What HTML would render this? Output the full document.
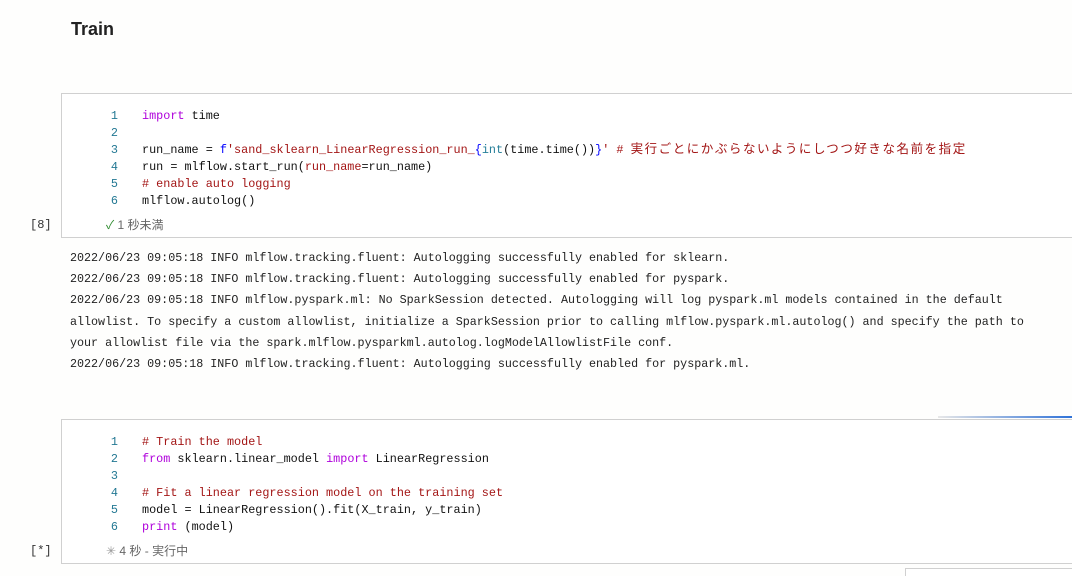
<!DOCTYPE html>
<html style="overflow:hidden"><head><meta charset="utf-8"><style>
html,body{margin:0;width:1072px;height:576px;overflow:hidden}
body{background:#fefefd;position:relative;font-family:"Liberation Sans","Noto Sans CJK JP",sans-serif}
h1{position:absolute;left:71px;top:19px;margin:0;font-size:18px;font-weight:bold;color:#222}
.cell{position:absolute;left:61px;width:1020px;border:1px solid #d0d0d0;background:#fff;box-sizing:border-box}
.code{position:absolute;left:0;top:0;font-family:"Liberation Mono","Noto Sans CJK JP",monospace;font-size:11.8px;color:#111;white-space:pre}
.ln,.l{line-height:14px;height:14px}
.ln{position:absolute;left:48px;width:8px;text-align:right;color:#237893}
.l{position:absolute;left:80px}
.k{color:#af00db}.c{color:#a31515}.s{color:#a31515}.b{color:#0000ff}.p{color:#a31515}.g{color:#267f99}
.st{position:absolute;left:44px;font-size:12px;color:#666}
.lab{position:absolute;left:30px;font-family:"Liberation Mono",monospace;font-size:12px;color:#333}
.out{position:absolute;left:70px;top:248px;font-family:"Liberation Mono","Noto Sans CJK JP",monospace;font-size:11.7px;line-height:21.2px;color:#222;white-space:pre}
</style></head><body>
<h1>Train</h1>
<div class="cell" style="top:93px;height:145px">
<div class="code"><span class="ln" style="top:15px">1</span><span class="l" style="top:15px"><span class="k">import</span> time</span><span class="ln" style="top:32px">2</span><span class="ln" style="top:49px">3</span><span class="l" style="top:49px">run_name = <span class="b">f</span><span class="s">'sand_sklearn_LinearRegression_run_</span><span class="b">{</span><span class="g">int</span>(time.time())<span class="b">}</span><span class="s">'</span> <span class="c"># <span style="font-size:12.5px;letter-spacing:1.55px">実行ごとにかぶらないようにしつつ好きな名前を指定</span></span></span><span class="ln" style="top:66px">4</span><span class="l" style="top:66px">run = mlflow.start_run(<span class="p">run_name</span>=run_name)</span><span class="ln" style="top:83px">5</span><span class="l" style="top:83px"><span class="c"># enable auto logging</span></span><span class="ln" style="top:100px">6</span><span class="l" style="top:100px">mlflow.autolog()</span></div>
<div class="st" style="top:122px"><span style="color:#2e8b2e">✓</span> 1 秒未満</div>
</div>
<div class="lab" style="top:218px">[8]</div>
<div class="out">2022/06/23 09:05:18 INFO mlflow.tracking.fluent: Autologging successfully enabled for sklearn.
2022/06/23 09:05:18 INFO mlflow.tracking.fluent: Autologging successfully enabled for pyspark.
2022/06/23 09:05:18 INFO mlflow.pyspark.ml: No SparkSession detected. Autologging will log pyspark.ml models contained in the default
allowlist. To specify a custom allowlist, initialize a SparkSession prior to calling mlflow.pyspark.ml.autolog() and specify the path to
your allowlist file via the spark.mlflow.pysparkml.autolog.logModelAllowlistFile conf.
2022/06/23 09:05:18 INFO mlflow.tracking.fluent: Autologging successfully enabled for pyspark.ml.</div>
<div style="position:absolute;left:938px;top:416px;width:134px;height:2px;background:linear-gradient(90deg,#e8e8e8,#2f72d8)"></div>
<div class="cell" style="top:419px;height:145px">
<div class="code"><span class="ln" style="top:15px">1</span><span class="l" style="top:15px"><span class="c"># Train the model</span></span><span class="ln" style="top:32px">2</span><span class="l" style="top:32px"><span class="k">from</span> sklearn.linear_model <span class="k">import</span> LinearRegression</span><span class="ln" style="top:49px">3</span><span class="ln" style="top:66px">4</span><span class="l" style="top:66px"><span class="c"># Fit a linear regression model on the training set</span></span><span class="ln" style="top:83px">5</span><span class="l" style="top:83px">model = LinearRegression().fit(X_train, y_train)</span><span class="ln" style="top:100px">6</span><span class="l" style="top:100px"><span class="k">print</span> (model)</span></div>
<div class="st" style="top:122px"><span style="color:#999">✳</span> 4 秒 - 実行中</div>
</div>
<div class="lab" style="top:544px">[*]</div>
<div style="position:absolute;left:905px;top:568px;width:200px;height:20px;border:1px solid #d0d0d0;background:#fff"></div>
</body></html>
